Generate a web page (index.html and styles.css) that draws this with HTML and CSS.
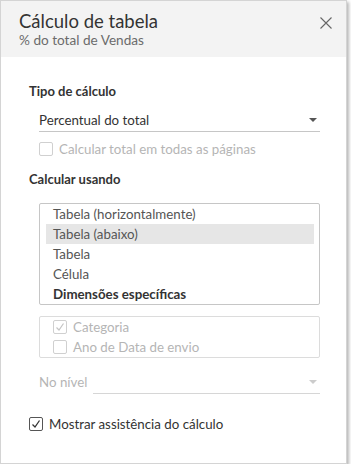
FILE: index.html
```html
<!DOCTYPE html>
<html lang="pt">
<head>
    <meta charset="UTF-8">
    <title>Cálculo de tabela</title>
    <link rel="stylesheet" href="styles.css">
</head>
<body>
    <div class="dialog">
        <div class="header">
            <div class="titles">
                <div class="title">Cálculo de tabela</div>
                <div class="subtitle">% do total de Vendas</div>
            </div>
            <button type="button" class="close" aria-label="Fechar">
                <svg width="12" height="12" viewBox="0 0 12 12">
                    <path d="M0.5 0.5 L11.5 11.5 M11.5 0.5 L0.5 11.5" stroke="#666" stroke-width="1.1" fill="none"/>
                </svg>
            </button>
        </div>
        <div class="body">
            <h3 class="section first">Tipo de cálculo</h3>
            <div class="select">
                <span>Percentual do total</span>
                <span class="arrow"></span>
            </div>
            <label class="check disabled">
                <span class="box"></span>
                Calcular total em todas as páginas
            </label>

            <h3 class="section">Calcular usando</h3>
            <ul class="listbox">
                <li>Tabela (horizontalmente)</li>
                <li class="selected">Tabela (abaixo)</li>
                <li>Tabela</li>
                <li>Célula</li>
                <li class="strong">Dimensões específicas</li>
            </ul>
            <div class="dims">
                <label class="check disabled">
                    <span class="box">
                        <svg width="14" height="14" viewBox="0 0 14 14">
                            <path d="M3.5 7.5 L6 10 L10.5 3.5" stroke="#c4c4c4" stroke-width="1.2" fill="none"/>
                        </svg>
                    </span>
                    Categoria
                </label>
                <label class="check disabled">
                    <span class="box"></span>
                    Ano de Data de envio
                </label>
            </div>
            <div class="level">
                <span class="level-label">No nível</span>
                <div class="select disabled">
                    <span></span>
                    <span class="arrow"></span>
                </div>
            </div>
            <label class="check assist">
                <span class="box">
                    <svg width="14" height="14" viewBox="0 0 14 14">
                        <path d="M3.5 7.5 L6 10 L10.5 3.5" stroke="#333" stroke-width="1.3" fill="none"/>
                    </svg>
                </span>
                Mostrar assistência do cálculo
            </label>
        </div>
    </div>
</body>
</html>
```

FILE: styles.css
```css
body {
    margin: 0;
    font-family: Lato, "Open Sans", sans-serif;
    color: #333;
}
.dialog {
    box-sizing: border-box;
    width: 347px;
    height: 464px;
    background: #fff;
    border: 1px solid #d4d4d4;
    box-shadow: 2px 2px 3px rgba(0, 0, 0, .28);
}
.header {
    display: flex;
    justify-content: space-between;
    align-items: flex-start;
    height: 56px;
    padding: 9px 14px 0 18px;
    box-sizing: border-box;
    background: #f3f3f3;
}
.title {
    font-size: 18.5px;
    line-height: 22px;
    color: #333;
}
.subtitle {
    font-size: 13.6px;
    line-height: 16px;
    color: #6b6b6b;
}
.close {
    border: 0;
    padding: 0;
    margin-top: 7px;
    background: none;
    line-height: 0;
}
.body {
    padding: 0 26px 0 28px;
}
.section {
    margin: 0;
    font-size: 13px;
    font-weight: bold;
    line-height: 16px;
    color: #333;
}
.section.first {
    padding-top: 26px;
}
.select {
    display: flex;
    justify-content: space-between;
    align-items: center;
    height: 23px;
    margin: 9px 0 0 10px;
    font-size: 13.3px;
    color: #333;
    border-bottom: 1px solid #c6c6c6;
}
.arrow {
    width: 0;
    height: 0;
    margin-right: 3px;
    border-left: 4px solid transparent;
    border-right: 4px solid transparent;
    border-top: 4px solid #555;
}
.check {
    display: flex;
    align-items: center;
    gap: 6px;
    height: 20px;
    font-size: 13.3px;
    color: #555;
}
.box {
    box-sizing: border-box;
    width: 14px;
    height: 14px;
    border: 1px solid #999;
    border-radius: 2px;
    background: #fff;
    line-height: 0;
}
.box svg {
    margin: -1px 0 0 -1px;
}
.check.disabled {
    color: #b5b5b5;
}
.check.disabled .box {
    border-color: #d0d0d0;
}
.body > .check.disabled {
    margin: 7px 0 0 10px;
}
.section + .listbox {
    margin-top: 16px;
}
.body > .check.disabled + .section {
    margin-top: 12px;
}
.listbox {
    list-style: none;
    margin: 0 0 0 10px;
    padding: 0 5px 0 6px;
    border: 1px solid #c6c6c6;
    border-radius: 2px;
}
.listbox li {
    height: 20px;
    line-height: 20px;
    padding-left: 7px;
    font-size: 13.3px;
    color: #555;
}
.listbox li.selected {
    background: #e6e6e6;
}
.listbox li.strong {
    font-weight: bold;
    color: #333;
}
.dims {
    margin: 11px 0 0 10px;
    padding: 0 0 0 13px;
    border: 1px solid #dcdcdc;
    border-radius: 2px;
}
.level {
    display: flex;
    align-items: flex-end;
    margin: 12px 0 0 10px;
}
.level-label {
    width: 54px;
    font-size: 13.3px;
    line-height: 22px;
    color: #b5b5b5;
    margin-bottom: 1px;
}
.level .select {
    flex: 1;
    margin: 0;
}
.select.disabled .arrow {
    border-top-color: #ccc;
}
.select.disabled {
    border-bottom-color: #d6d6d6;
}
.check.assist {
    margin-top: 20px;
    color: #333;
}
.check.assist .box {
    border-color: #555;
}
```
